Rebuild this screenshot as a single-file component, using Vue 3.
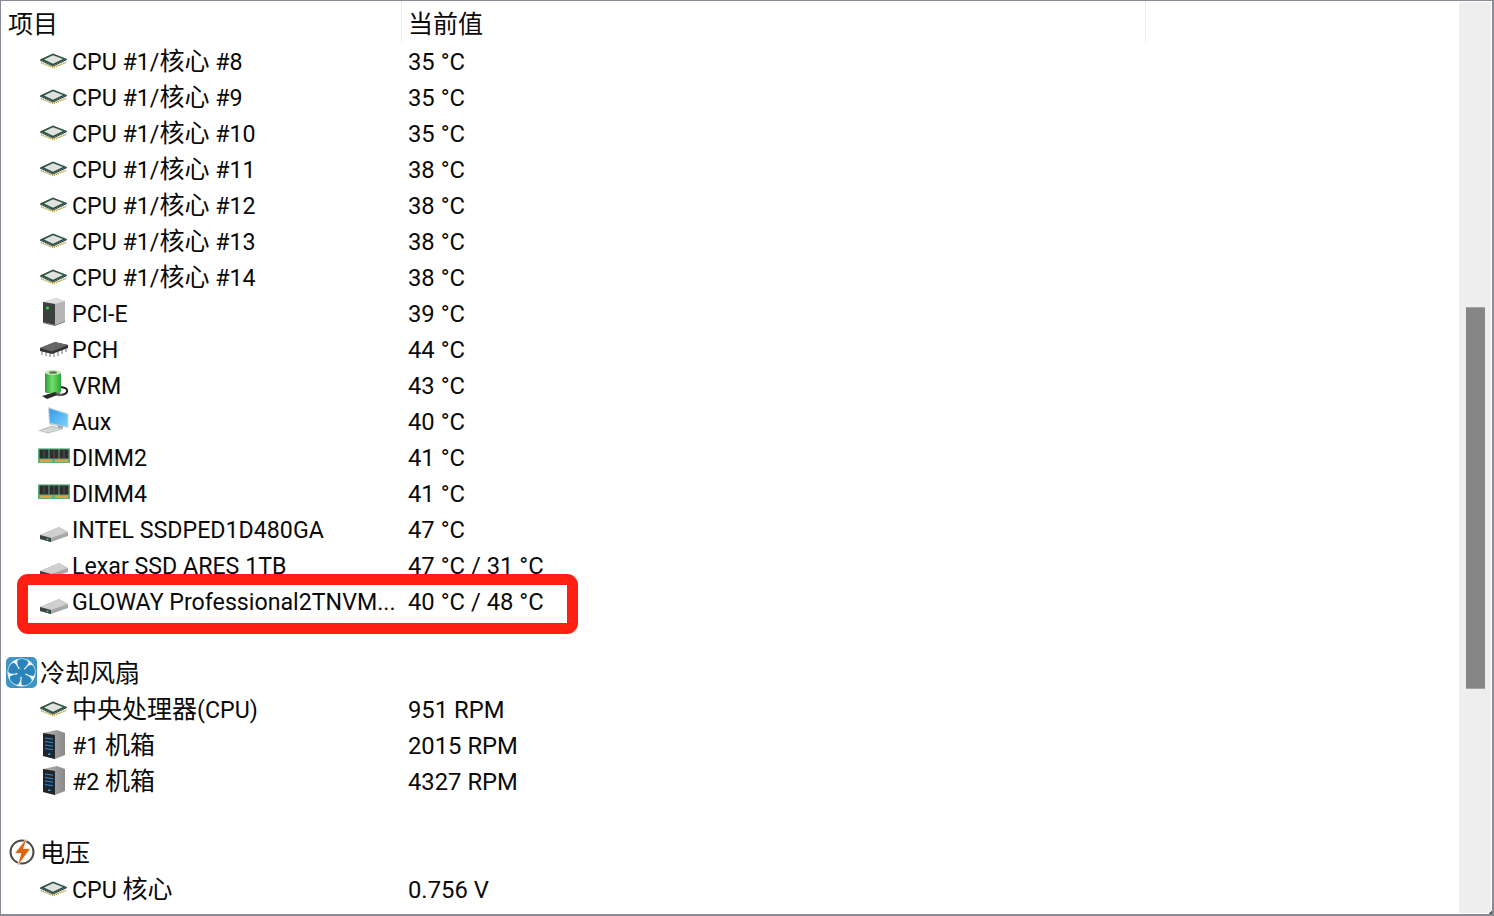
<script setup>
const cpuRows = [8, 9, 10, 11, 12, 13, 14].map((n, i) => ({
  icon: 'chip',
  name: `CPU #1/核心 #${n}`,
  value: `${i < 3 ? 35 : 38} °C`,
}));

const rows = [
  ...cpuRows,
  { icon: 'tower', name: 'PCI-E', value: '39 °C' },
  { icon: 'pch', name: 'PCH', value: '44 °C' },
  { icon: 'battery', name: 'VRM', value: '43 °C' },
  { icon: 'desktop', name: 'Aux', value: '40 °C' },
  { icon: 'dimm', name: 'DIMM2', value: '41 °C' },
  { icon: 'dimm', name: 'DIMM4', value: '41 °C' },
  { icon: 'disk', name: 'INTEL SSDPED1D480GA', value: '47 °C' },
  { icon: 'disk', name: 'Lexar SSD ARES 1TB', value: '47 °C / 31 °C' },
  { icon: 'disk', name: 'GLOWAY Professional2TNVM...', value: '40 °C / 48 °C', marked: true },
  { blank: true },
  { icon: 'fan', name: '冷却风扇', section: true },
  { icon: 'chip', name: '中央处理器(CPU)', value: '951 RPM' },
  { icon: 'server', name: '#1 机箱', value: '2015 RPM' },
  { icon: 'server', name: '#2 机箱', value: '4327 RPM' },
  { blank: true },
  { icon: 'bolt', name: '电压', section: true },
  { icon: 'chip', name: 'CPU 核心', value: '0.756 V' },
];

// the chinese glyphs run a little larger than the latin ones in the original
const parts = (text) => text.match(/[\u4e00-\u9fff]+|[^\u4e00-\u9fff]+/g).map((t) => ({
  text: t,
  cjk: /[\u4e00-\u9fff]/.test(t),
}));
</script>

<template>
  <div class="window">
    <svg class="defs" aria-hidden="true">
      <defs>
        <linearGradient id="g-batt" x1="0" x2="1" y1="0" y2="0">
          <stop offset="0" stop-color="#2c9a3a" />
          <stop offset="0.45" stop-color="#6fe06a" />
          <stop offset="1" stop-color="#2da538" />
        </linearGradient>
        <linearGradient id="g-screen" x1="0" x2="1" y1="0" y2="1">
          <stop offset="0" stop-color="#2f9be8" />
          <stop offset="1" stop-color="#7fd0fb" />
        </linearGradient>
        <linearGradient id="g-side" x1="0" x2="1" y1="0" y2="0">
          <stop offset="0" stop-color="#b4b4b4" />
          <stop offset="1" stop-color="#8a8a8a" />
        </linearGradient>

        <symbol id="chip" viewBox="0 0 32 32">
          <path d="M3 16.5 L15 21.5 L28 16.5" fill="none" stroke="#b59a3c" stroke-width="1.6" stroke-dasharray="1.2 0.8" transform="translate(0 1)" />
          <path d="M2 14.5 L15 8.5 L29 14 L15 20.5 Z" fill="#2c4f40" />
          <path d="M2 14.5 L15 20.5 L29 14 L29 15 L15 21.5 L2 15.5 Z" fill="#1f3b30" />
          <path d="M6 14.5 L15 10.2 L25 14 L15 18.7 Z" fill="#dfe2de" />
        </symbol>

        <symbol id="tower" viewBox="0 0 32 32">
          <path d="M5 5 L18 1 L27 4 L27 24 L17 28 L5 26 Z" fill="#b5b5b5" />
          <path d="M5 5 L17 7 L27 4 L18 1 Z" fill="#dedede" />
          <path d="M5 5 L17 7 L17 28 L5 25 Z" fill="#3b3f3e" />
          <path d="M5 25 L17 28 L27 24 L27 25 L17 29 L5 26 Z" fill="#6e6e6e" />
          <circle cx="9.5" cy="11" r="1.5" fill="#35d45a" />
        </symbol>

        <symbol id="pch" viewBox="0 0 32 32">
          <path d="M4 17 V22 M8 18 V23 M12 19 V24 M16 19 V24 M20 18 V23 M24 16 V21 M28 14 V19" stroke="#b8b8b8" stroke-width="2" />
          <path d="M2 15 L17 9 L30 12 L30 15 L14 21 L2 18 Z" fill="#333" />
          <path d="M2 15 L17 9 L30 12 L14 18.5 Z" fill="#666" />
        </symbol>

        <symbol id="battery" viewBox="0 0 32 32">
          <path d="M18 25 C24 27 30 25 29 21 C28 18 25 19 23 18" fill="none" stroke="#1e1e1e" stroke-width="2" />
          <rect x="7" y="3" width="16" height="21" rx="2" fill="url(#g-batt)" />
          <ellipse cx="15" cy="3.5" rx="8" ry="2.6" fill="#c7e8b8" />
          <ellipse cx="15" cy="3.5" rx="4" ry="1.3" fill="#5a7a50" />
          <path d="M4 27 L17 23 L22 25 L9 30 Z" fill="#2a2a2a" />
          <path d="M17 23.5 L25 25.5 L21 27.5 Z" fill="#666" />
        </symbol>

        <symbol id="desktop" viewBox="0 0 32 32">
          <path d="M10 2 L30.5 8.5 L30.5 23 L11 19.5 Z" fill="#c9d4da" />
          <path d="M11 3.5 L29.5 9.5 L29.5 21.5 L12 18 Z" fill="url(#g-screen)" />
          <path d="M20 20 L25 21 L25 24 L19 23 Z" fill="#a9aeb2" />
          <path d="M0 25.5 L14 20.5 L25 24 L10 28.5 Z" fill="#b9bdbd" />
          <path d="M3 25.5 L14 21.5 L22 24 L10 27.5 Z" fill="#dcdede" />
          <path d="M6 24.5 L15 21.5 M9 26 L18 23" stroke="#a8acac" stroke-width="0.6" stroke-dasharray="1 0.6" />
        </symbol>

        <symbol id="dimm" viewBox="0 0 32 32">
          <rect x="0" y="7" width="32" height="15" fill="#5fae80" />
          <rect x="0" y="7" width="32" height="1" fill="#8ccfa8" />
          <rect x="1.5" y="8.5" width="9" height="9" fill="#2e2e2e" />
          <rect x="11.5" y="8.5" width="9" height="9" fill="#2e2e2e" />
          <rect x="21.5" y="8.5" width="9" height="9" fill="#2e2e2e" />
          <path d="M6 8.5 V17.5 M16 8.5 V17.5 M26 8.5 V17.5" stroke="#555" stroke-width="1" />
          <rect x="2" y="18.5" width="12" height="2.5" fill="#d9a34c" />
          <rect x="17" y="18.5" width="13" height="2.5" fill="#d9a34c" />
        </symbol>

        <symbol id="disk" viewBox="0 0 32 32">
          <path d="M2 22 L21 14 L30 19 L30 23 L13 29 L2 26 Z" fill="#a8a8a8" />
          <path d="M2 22 L21 14 L30 19 L13 25 Z" fill="#cfcfcf" />
          <path d="M2 22 L13 25 L13 29 L2 26 Z" fill="#3e4141" />
          <rect x="8.5" y="25.5" width="2" height="1.5" fill="#3fd15f" />
        </symbol>

        <symbol id="fan" viewBox="0 0 32 32">
          <rect x="0" y="0" width="31" height="31" rx="5" fill="#3e94c3" />
          <circle cx="15.5" cy="15.5" r="14" fill="#f3f8fb" />
          <g fill="#2b84b9">
            <path id="blade" d="M15.5 13 C12 10 10 6 12 2.8 C16 1 21.5 2.5 22.5 5.5 C21 9 18 12 15.5 13 Z" />
            <use href="#blade" transform="rotate(72 15.5 15.5)" />
            <use href="#blade" transform="rotate(144 15.5 15.5)" />
            <use href="#blade" transform="rotate(216 15.5 15.5)" />
            <use href="#blade" transform="rotate(288 15.5 15.5)" />
            <circle cx="15.5" cy="15.5" r="4.4" />
          </g>
        </symbol>

        <symbol id="server" viewBox="0 0 32 32">
          <path d="M5 4 L19 1 L27 4 L27 26 L17 30 L5 27 Z" fill="url(#g-side)" />
          <path d="M5 4 L17 6 L17 30 L5 27 Z" fill="#20252b" />
          <path d="M7 9 L15 10.2 M7 12.5 L15 13.7 M7 16 L15 17.2 M7 19.5 L15 20.7" stroke="#2b8fdc" stroke-width="1" />
          <rect x="10" y="24.5" width="2.5" height="1.5" fill="#2ba4f0" />
        </symbol>

        <symbol id="bolt" viewBox="0 0 32 32">
          <circle cx="16" cy="15" r="11.5" fill="none" stroke="#4a4a4a" stroke-width="2" />
          <path d="M21.5 0 L8.5 16.5 L15 16.5 L11 30 L24.5 11.5 L17.5 11.5 Z" fill="#dd6410" stroke="#fff" stroke-width="0.7" />
        </symbol>
      </defs>
    </svg>

    <div class="list">
      <div class="header">
        <div class="head-cell name-col">项目</div>
        <div class="head-cell value-col">当前值</div>
      </div>

      <template v-for="(row, i) in rows" :key="i">
        <div v-if="row.blank" class="row"></div>
        <div v-else class="row" :class="{ section: row.section }">
          <div class="name">
            <svg class="icon"><use :href="`#${row.icon}`" /></svg>
            <span class="label"><span v-for="p in parts(row.name)" :class="{ cjk: p.cjk }">{{ p.text }}</span></span>
          </div>
          <div v-if="row.value" class="value">{{ row.value }}</div>
          <div v-if="row.marked" class="mark"></div>
        </div>
      </template>
    </div>

    <div class="scrollbar">
      <div class="thumb"></div>
    </div>
    <div class="corner"></div>
  </div>
</template>

<style>
html,
body {
  margin: 0;
  background: #fff;
}
</style>

<style scoped>
.window {
  position: relative;
  box-sizing: border-box;
  width: 1494px;
  height: 916px;
  display: flex;
  overflow: hidden;
  background: #fff;
  border: 1px solid #868b95;
  border-right-width: 2px;
  border-bottom-width: 2px;
  font-family: "Roboto", "Noto Sans CJK SC", sans-serif;
  font-size: 23.2px;
  color: #0a0a0a;
}

.defs {
  display: block;
  width: 0;
  height: 0;
}

.list {
  flex: 1;
  min-width: 0;
  overflow: hidden;
}

.header {
  display: flex;
  height: 42px;
}

.head-cell {
  box-sizing: border-box;
  padding: 3px 0 0 7px;
  font-family: "Noto Sans CJK SC", sans-serif;
  font-size: 25px;
  line-height: 36px;
  border-right: 1px solid #ececec;
}

.name-col {
  width: 401px;
}

.value-col {
  width: 744px;
  padding-left: 6px;
}

.row {
  position: relative;
  display: flex;
  align-items: center;
  height: 36px;
  line-height: 36px;
}

.name {
  display: flex;
  align-items: center;
  gap: 2px;
  box-sizing: border-box;
  width: 407px;
  padding-left: 37px;
  white-space: nowrap;
}

.section .name {
  padding-left: 5px;
}

.label {
  padding-top: 2px;
}

.cjk {
  font-size: 25px;
}

.icon {
  width: 32px;
  height: 32px;
  flex-shrink: 0;
}

.value {
  padding-top: 2px;
  font-size: 23.8px;
  white-space: nowrap;
}

.mark {
  position: absolute;
  left: 16px;
  top: -9px;
  box-sizing: border-box;
  width: 561px;
  height: 60px;
  border: 11px solid #ff1f12;
  border-radius: 11px;
}

.scrollbar {
  flex-shrink: 0;
  box-sizing: border-box;
  width: 33px;
  padding: 305px 6px 0 7px;
  border-top: 1px solid #fff;
  border-bottom: 1px solid #fff;
  border-right: 1px solid #fff;
  background: #eee;
}

.thumb {
  height: 382px;
  background: #868686;
  border-top: 1px solid #a5a5a5;
  border-bottom: 1px solid #a5a5a5;
  box-sizing: border-box;
}

.corner {
  position: absolute;
  right: -2px;
  bottom: -2px;
  width: 7px;
  height: 8px;
  background: linear-gradient(135deg, transparent 50%, #5f5a4a 50%);
}
</style>
